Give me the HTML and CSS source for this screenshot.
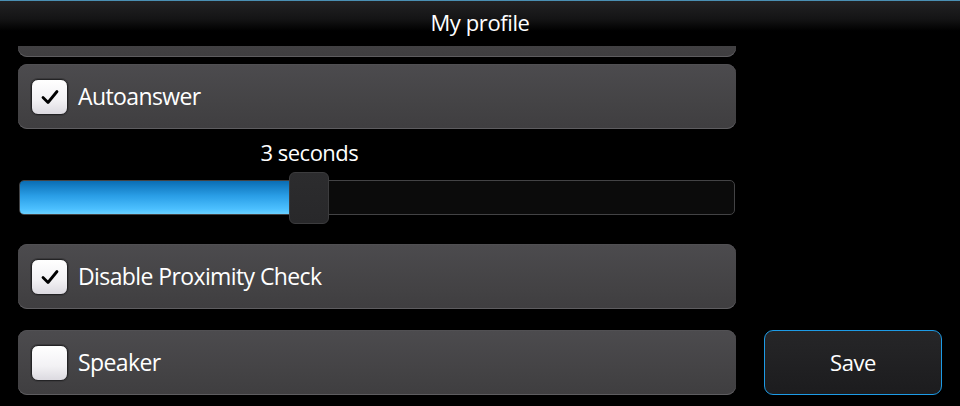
FILE: index.html
```html
<!DOCTYPE html>
<html lang="en">
<head>
<meta charset="utf-8">
<title>My profile</title>
<link rel="stylesheet" href="styles.css">
</head>
<body>
<div class="screen">
  <header class="titlebar">
    <h1 class="title">My profile</h1>
  </header>
  <main class="content">
    <div class="list">
      <div class="card card-clipped"></div>
      <label class="card">
        <span class="check checked"><svg viewBox="0 0 24 24" class="tick"><path d="M5 12.5 L10 17.5 L19 6.5" /></svg></span>
        <span class="card-text">Autoanswer</span>
      </label>
      <div class="slider-block">
        <div class="slider" style="--v:0.4">
          <span class="slider-label">3 seconds</span>
          <div class="track">
            <div class="fill"></div>
          </div>
          <span class="thumb"></span>
        </div>
      </div>
      <label class="card">
        <span class="check checked"><svg viewBox="0 0 24 24" class="tick"><path d="M5 12.5 L10 17.5 L19 6.5" /></svg></span>
        <span class="card-text">Disable Proximity Check</span>
      </label>
      <label class="card card-last">
        <span class="check"></span>
        <span class="card-text">Speaker</span>
      </label>
    </div>
    <div class="side">
      <button class="save">Save</button>
    </div>
  </main>
</div>
</body>
</html>
```
FILE: styles.css
```css
html, body {
  margin: 0;
  padding: 0;
  background: #000;
}
body {
  width: 960px;
  height: 406px;
  overflow: hidden;
  font-family: "Open Sans", "Noto Sans", sans-serif;
  color: #fff;
}
.screen {
  display: flex;
  flex-direction: column;
  height: 406px;
}
.titlebar {
  height: 46px;
  flex: none;
  border-top: 1px solid #4a8fb3;
  box-sizing: border-box;
  background: linear-gradient(#222224 0px, #141415 18px, #000 30px, #000 46px);
  display: flex;
  justify-content: center;
}
.title {
  margin: 0;
  padding-top: 6px;
  font-size: 22px;
  font-weight: 400;
  line-height: 30px;
  letter-spacing: -0.4px;
}
.content {
  flex: 1;
  overflow: hidden;
  display: grid;
  grid-template-columns: 718px 178px;
  column-gap: 28px;
  padding: 0 18px;
}
.list {
  display: flex;
  flex-direction: column;
}
.card {
  box-sizing: border-box;
  height: 65px;
  border-radius: 9px;
  background: linear-gradient(#4c4b4e, #434244 70%, #3f3e40);
  box-shadow: inset 0 -1px 0 #5e5d60, inset 0 1px 0 #515053;
  display: flex;
  align-items: center;
  padding-left: 13px;
  flex: none;
}
.card-clipped {
  margin-top: -54px;
  margin-bottom: 7px;
}
.card-last {
  margin-top: 21px;
}
.check {
  box-sizing: border-box;
  width: 37px;
  height: 36px;
  border-radius: 7px;
  border: 1px solid #232325;
  background: linear-gradient(#ffffff, #f2f1f4 60%, #dcdae0);
  box-shadow: 0 0 0 1px #3a393b;
  display: flex;
  align-items: center;
  justify-content: center;
  flex: none;
}
.tick {
  width: 24px;
  height: 24px;
}
.tick path {
  fill: none;
  stroke: #000;
  stroke-width: 2.8;
  stroke-linecap: round;
  stroke-linejoin: round;
}
.card-text {
  margin-left: 10px;
  font-size: 23px;
  letter-spacing: -0.6px;
  line-height: 30px;
  padding-bottom: 2px;
}
.slider-block {
  height: 115px;
  box-sizing: border-box;
  padding-top: 51px;
  flex: none;
}
.slider {
  position: relative;
  margin-left: 1px;
  margin-right: 1px;
}
.track {
  box-sizing: border-box;
  height: 35px;
  border-radius: 5px;
  border: 1px solid #434345;
  background: #0b0b0b;
  overflow: hidden;
}
.fill {
  height: 100%;
  width: calc(var(--v) * (100% - 40px) + 20px);
  background: linear-gradient(#0a6db4, #2a9ee6 45%, #4cc0ff 85%, #6ad0ff);
}
.thumb {
  position: absolute;
  top: -8px;
  left: calc(var(--v) * (100% - 40px));
  width: 40px;
  height: 52px;
  box-sizing: border-box;
  border-radius: 6px;
  border: 1px solid #3c3c3e;
  background: linear-gradient(#2c2c2e, #28282a);
}
.slider-label {
  position: absolute;
  top: -43px;
  left: calc(var(--v) * (100% - 40px) + 20px);
  transform: translateX(-50%);
  white-space: nowrap;
  font-size: 22px;
  letter-spacing: -0.5px;
  line-height: 30px;
}
.side {
  display: flex;
  flex-direction: column;
  justify-content: flex-end;
  padding-bottom: 11px;
}
.save {
  box-sizing: border-box;
  height: 65px;
  width: 178px;
  border-radius: 9px;
  border: 1.5px solid #1d9be6;
  background: linear-gradient(#262628, #1c1c1e);
  color: #fff;
  font-family: "Open Sans", "Noto Sans", sans-serif;
  font-size: 22px;
  letter-spacing: -0.4px;
  padding: 0 0 2px;
}
```
